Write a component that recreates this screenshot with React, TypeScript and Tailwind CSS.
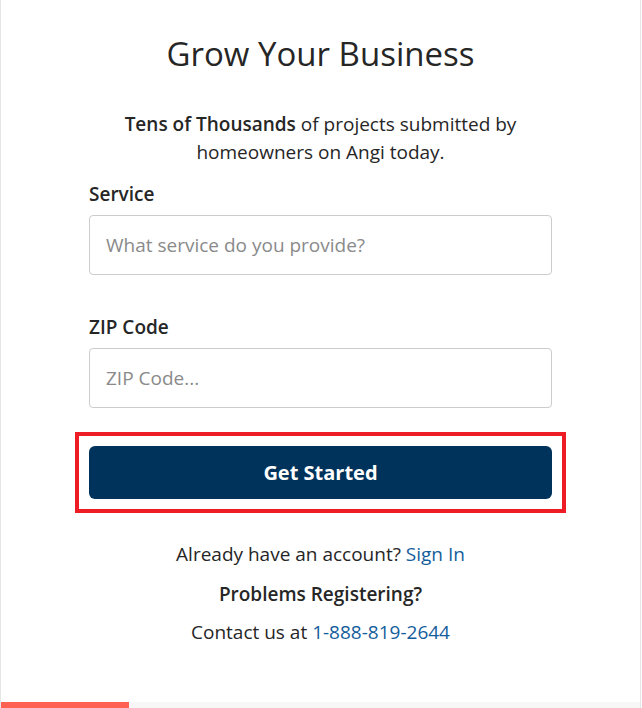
import { useState } from 'react';

export default function App() {
  const [service, setService] = useState('');
  const [zip, setZip] = useState('');

  return (
    <div className="h-[708px] w-full bg-white font-['Open_Sans',sans-serif] text-[#262626]">
      <div className="relative flex h-full w-[641px] flex-col border-x border-[#e6e6e6] bg-white">
        <div className="flex flex-col items-center px-[88px] pt-[34px]">
          <h1 className="text-[33px] leading-[40px] font-medium">Grow Your Business</h1>
          <p className="mt-[36px] text-center text-[19px] leading-[28px]">
            <span className="font-semibold">Tens of Thousands</span> of projects submitted by
            <br />
            homeowners on Angi today.
          </p>
        </div>

        <form className="flex flex-col px-[88px] pt-[16px]" onSubmit={(e) => e.preventDefault()}>
          <label className="text-[19px] leading-[24px] font-semibold">Service</label>
          <input
            value={service}
            onChange={(e) => setService(e.target.value)}
            placeholder="What service do you provide?"
            className="mt-[9px] h-[60px] w-full rounded-[4px] border border-[#cccccc] px-[16px] text-[19px] placeholder:text-[#8a8a8a] outline-none"
          />

          <label className="mt-[40px] text-[19px] leading-[24px] font-semibold">ZIP Code</label>
          <input
            value={zip}
            onChange={(e) => setZip(e.target.value)}
            placeholder="ZIP Code..."
            className="mt-[9px] h-[60px] w-full rounded-[4px] border border-[#cccccc] px-[16px] text-[19px] placeholder:text-[#8a8a8a] outline-none"
          />

          <div className="mt-[24px] -mx-[14px] border-[4px] border-[#ee1c25] px-[10px] py-[10px]">
            <button
              type="submit"
              className="h-[53px] w-full rounded-[6px] bg-[#00335b] text-[20px] font-bold text-white"
            >
              Get Started
            </button>
          </div>
        </form>

        <div className="flex flex-col items-center pt-[28px] text-[19px] leading-[26px]">
          <p>
            Already have an account? <a href="#" className="text-[#145d9c]">Sign In</a>
          </p>
          <p className="mt-[14px] font-semibold">Problems Registering?</p>
          <p className="mt-[12px]">
            Contact us at <a href="#" className="text-[#145d9c]">1-888-819-2644</a>
          </p>
        </div>

        <div className="mt-auto flex h-[6px] w-full bg-[#f7f7f7]">
          <div className="h-full w-[128px] bg-[#ff6153]" />
        </div>
      </div>
    </div>
  );
}
